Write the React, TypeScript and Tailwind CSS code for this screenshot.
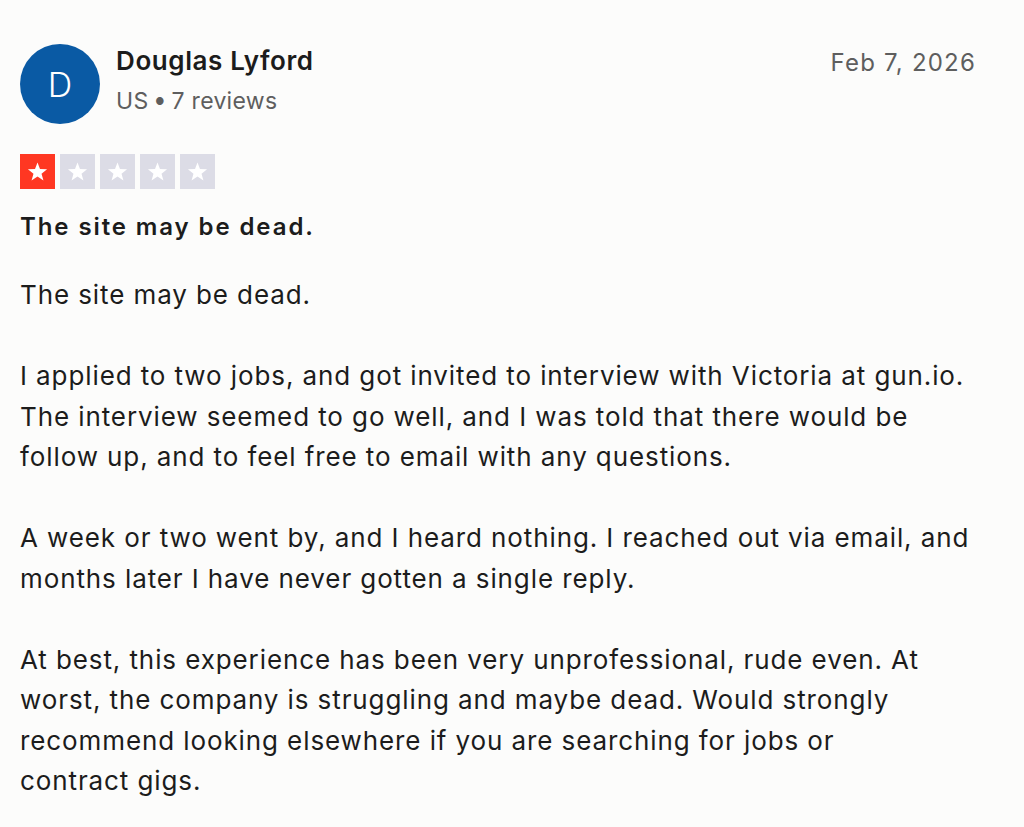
import React from 'react';

const paragraphs: string[][] = [
  ['The site may be dead.'],
  [
    'I applied to two jobs, and got invited to interview with Victoria at gun.io.',
    'The interview seemed to go well, and I was told that there would be',
    'follow up, and to feel free to email with any questions.',
  ],
  [
    'A week or two went by, and I heard nothing. I reached out via email, and',
    'months later I have never gotten a single reply.',
  ],
  [
    'At best, this experience has been very unprofessional, rude even. At',
    'worst, the company is struggling and maybe dead. Would strongly',
    'recommend looking elsewhere if you are searching for jobs or',
    'contract gigs.',
  ],
];

function Star({ filled }: { filled: boolean }) {
  return (
    <div
      className={
        filled
          ? 'w-[35px] h-[35px] bg-[#ff3722] flex items-center justify-center'
          : 'w-[35px] h-[35px] bg-[#dcdce6] flex items-center justify-center'
      }
    >
      <svg viewBox="0 0 24 24" className="w-[23px] h-[23px]" fill="#ffffff">
        <path d="M12 2.5l2.6 6.9 7.4.3-5.8 4.6 2 7.1L12 17.3l-6.2 4.1 2-7.1L2 9.7l7.4-.3z" />
      </svg>
    </div>
  );
}

export default function App() {
  return (
    <div className="min-h-[827px] w-[1024px] bg-[#fcfcfb] text-[#1c1c1c] font-['Inter',sans-serif] px-5 pt-[44px]">
      {/* Header */}
      <div className="flex items-start justify-between">
        <div className="flex items-center gap-4">
          <div className="w-[80px] h-[80px] rounded-full bg-[#0a5aa4] flex items-center justify-center text-white text-[34px] font-light">
            D
          </div>
          <div className="flex flex-col -mt-[2px]">
            <span className="text-[26px] font-semibold leading-[36px] tracking-[0.6px]">Douglas Lyford</span>
            <span className="text-[23px] leading-[44px] tracking-[0.3px] text-[#5e5e5e]">
              US <span className="text-[10px] align-[4px]">●</span> 7 reviews
            </span>
          </div>
        </div>
        <span className="text-[24px] text-[#5e5e5e] tracking-[1.2px] mt-[1px] mr-[28px]">Feb 7, 2026</span>
      </div>

      {/* Rating */}
      <div className="flex gap-[5px] mt-[30px]">
        {[0, 1, 2, 3, 4].map((i) => (
          <Star key={i} filled={i === 0} />
        ))}
      </div>

      <h2 className="text-[24px] font-semibold mt-[22px] leading-[32px] tracking-[1.9px]">The site may be dead.</h2>

      {/* Body */}
      <div className="mt-[32px] text-[26px] leading-[40.5px] tracking-[0.9px] flex flex-col gap-[40.5px]">
        {paragraphs.map((lines, i) => (
          <p key={i} className="whitespace-nowrap">
            {lines.map((l, j) => (
              <span key={j} className="block">
                {l}
              </span>
            ))}
          </p>
        ))}
      </div>
    </div>
  );
}
